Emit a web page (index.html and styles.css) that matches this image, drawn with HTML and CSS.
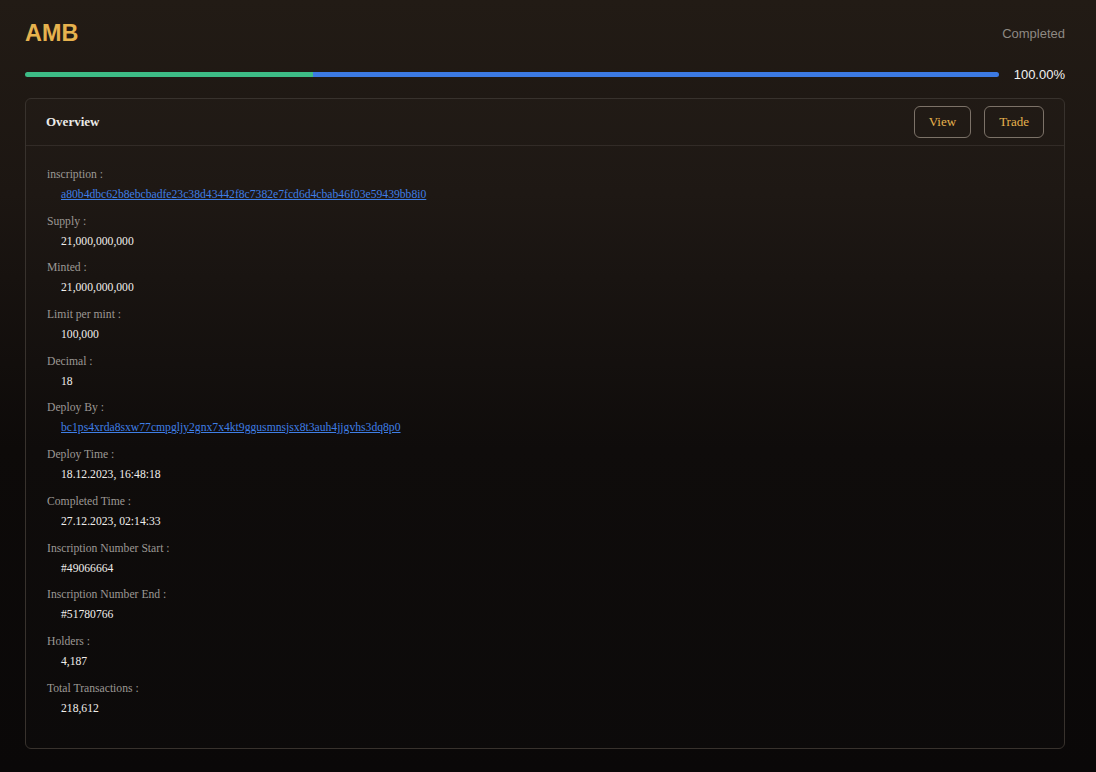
FILE: index.html
```html
<!DOCTYPE html>
<html>
<head>
<meta charset="utf-8">
<link rel="stylesheet" href="styles.css">
</head>
<body>
<div class="page">
  <div class="top">
    <h1 class="title">AMB</h1>
    <span class="status">Completed</span>
  </div>
  <div class="progress-row">
    <div class="bar">
      <div class="bar-green" style="width:29.6%"></div>
      <div class="bar-blue"></div>
    </div>
    <span class="pct">100.00%</span>
  </div>
  <div class="card">
    <div class="card-head">
      <span class="card-title">Overview</span>
      <div class="actions">
        <button class="btn btn-view">View</button>
        <button class="btn btn-trade">Trade</button>
      </div>
    </div>
    <div class="card-body">
      <div class="item"><div class="label">inscription :</div><div class="value"><a class="link" href="#">a80b4dbc62b8ebcbadfe23c38d43442f8c7382e7fcd6d4cbab46f03e59439bb8i0</a></div></div>
      <div class="item"><div class="label">Supply :</div><div class="value">21,000,000,000</div></div>
      <div class="item"><div class="label">Minted :</div><div class="value">21,000,000,000</div></div>
      <div class="item"><div class="label">Limit per mint :</div><div class="value">100,000</div></div>
      <div class="item"><div class="label">Decimal :</div><div class="value">18</div></div>
      <div class="item"><div class="label">Deploy By :</div><div class="value"><a class="link" href="#">bc1ps4xrda8sxw77cmpgljy2gnx7x4kt9ggusmnsjsx8t3auh4jjgvhs3dq8p0</a></div></div>
      <div class="item"><div class="label">Deploy Time :</div><div class="value">18.12.2023, 16:48:18</div></div>
      <div class="item"><div class="label">Completed Time :</div><div class="value">27.12.2023, 02:14:33</div></div>
      <div class="item"><div class="label">Inscription Number Start :</div><div class="value">#49066664</div></div>
      <div class="item"><div class="label">Inscription Number End :</div><div class="value">#51780766</div></div>
      <div class="item"><div class="label">Holders :</div><div class="value">4,187</div></div>
      <div class="item"><div class="label">Total Transactions :</div><div class="value">218,612</div></div>
    </div>
  </div>
</div>
</body>
</html>
```
FILE: styles.css
```css
html, body {
  margin: 0;
  padding: 0;
  height: 100%;
}
body {
  background: linear-gradient(180deg, #221b15 0%, #1c1612 25%, #0d0a09 58%, #0a0808 100%);
  background-color: #0a0808;
  font-family: "Liberation Serif", "Times New Roman", serif;
  color: #e8e6e3;
}
.page {
  padding: 18px 31px 24px 25px;
}
.top {
  display: flex;
  justify-content: space-between;
  align-items: center;
  height: 30px;
}
.title {
  margin: 0;
  font-family: "Liberation Sans", Arial, sans-serif;
  font-weight: 700;
  font-size: 23.4px;
  color: #e6b24e;
  line-height: 30px;
}
.status {
  font-family: "Liberation Sans", Arial, sans-serif;
  font-size: 13px;
  color: #8e8983;
}
.progress-row {
  display: flex;
  align-items: center;
  margin-top: 19px;
}
.bar {
  flex: 1;
  display: flex;
  height: 5px;
  border-radius: 3px;
  overflow: hidden;
}
.bar-green {
  background: #3dbc86;
  height: 100%;
}
.bar-blue {
  flex: 1;
  background: #3c7ae3;
  height: 100%;
}
.pct {
  margin-left: 15px;
  font-family: "Liberation Sans", Arial, sans-serif;
  font-size: 13px;
  color: #f2f2f2;
}
.card {
  margin-top: 16px;
  border: 1px solid #38322d;
  border-radius: 6px;
  background: rgba(255, 255, 255, 0.012);
}
.card-head {
  display: flex;
  justify-content: space-between;
  align-items: center;
  height: 46px;
  padding: 0 20px;
  border-bottom: 1px solid #322b27;
}
.card-title {
  font-weight: 700;
  font-size: 13px;
  color: #ecebe8;
}
.actions {
  display: flex;
  gap: 13px;
}
.btn {
  background: transparent;
  border: 1px solid #7c7268;
  border-radius: 6px;
  height: 32px;
  padding: 0 14px;
  font-family: "Liberation Serif", "Times New Roman", serif;
  font-size: 13px;
  color: #e6b24e;
}
.card-body {
  padding: 19px 21px 29px;
  display: flex;
  flex-direction: column;
  gap: 6.7px;
}
.label {
  font-size: 11.65px;
  line-height: 20px;
  color: #9c9894;
}
.value {
  font-size: 11.65px;
  line-height: 20px;
  padding-left: 14px;
  color: #f0eeeb;
}
.link {
  color: #3f7fe6;
  text-decoration: underline;
}
```
